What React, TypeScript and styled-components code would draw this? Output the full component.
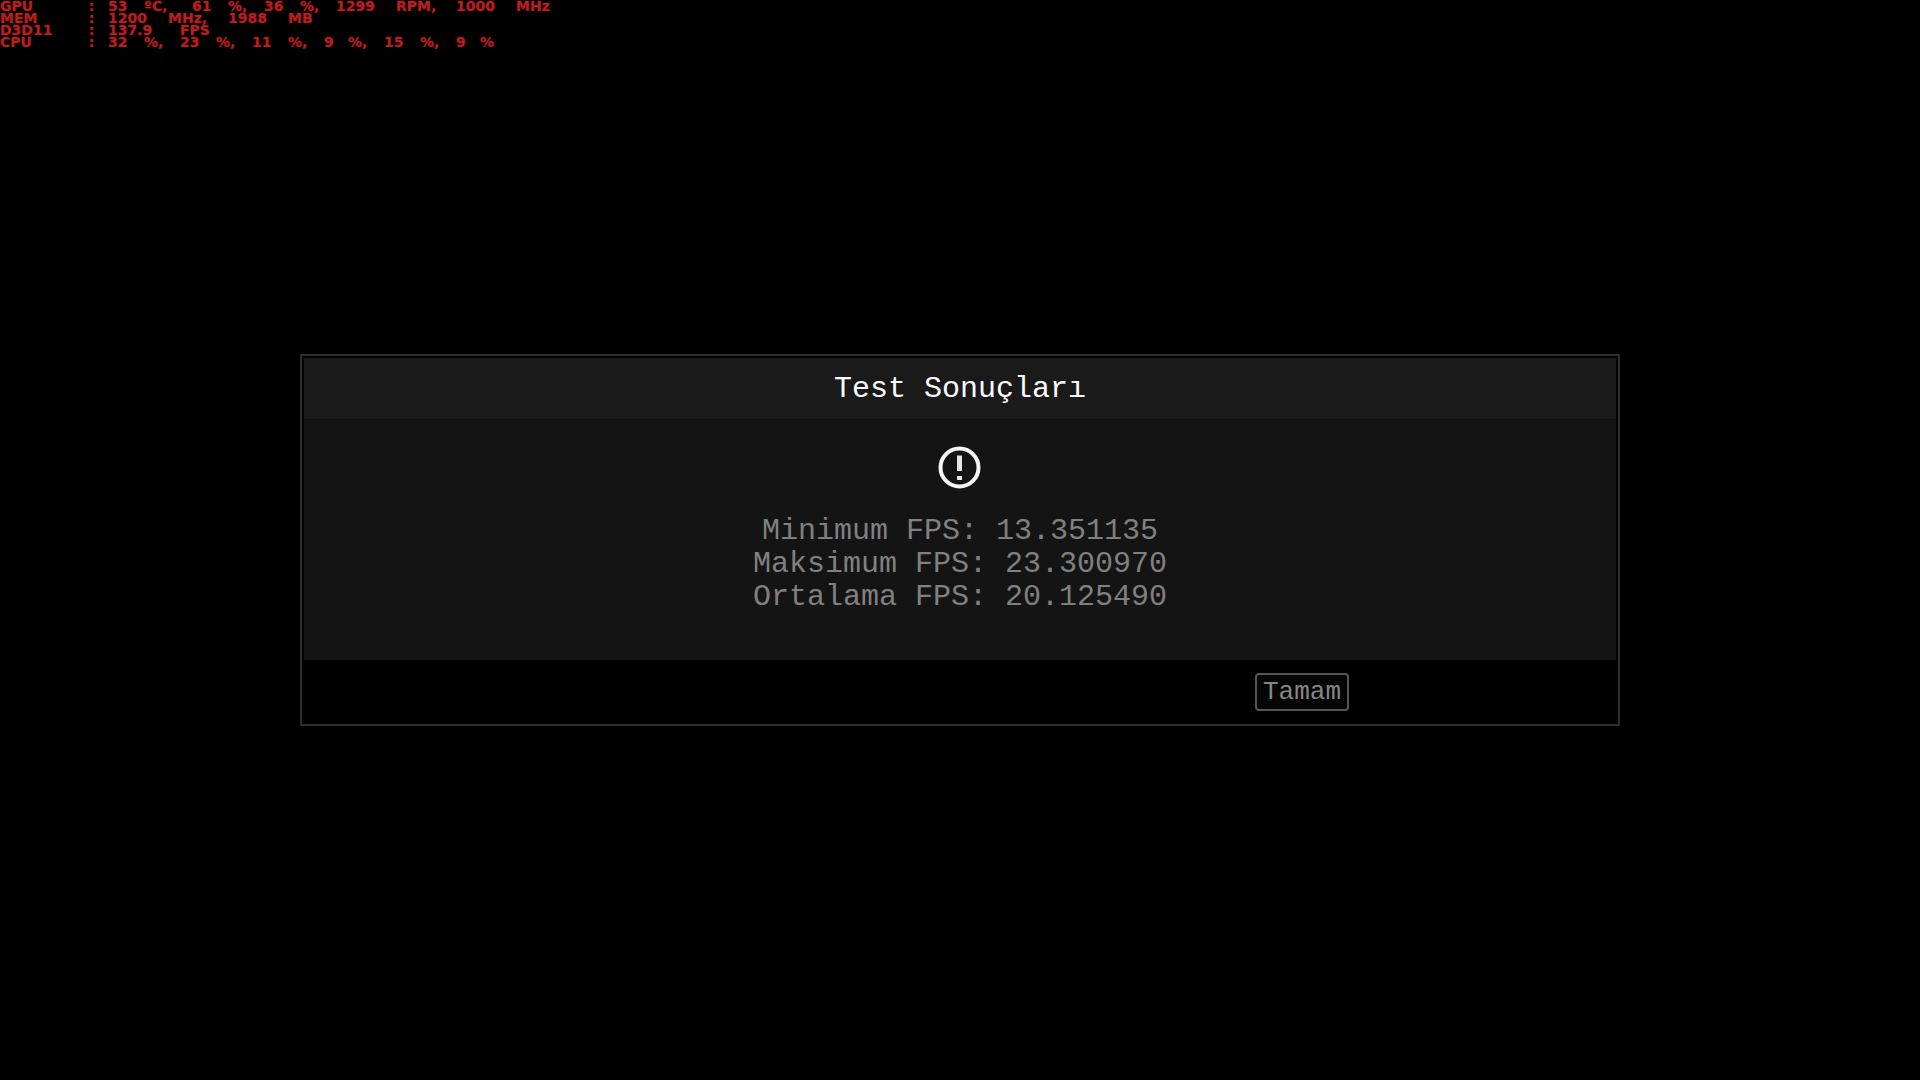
import React from "react";
import styled, { createGlobalStyle } from "styled-components";

const GlobalStyle = createGlobalStyle`
  *, *::before, *::after {
    box-sizing: border-box;
  }
  body {
    margin: 0;
    background: #000;
    font-family: "Liberation Mono", "DejaVu Sans Mono", monospace;
  }
`;

const Screen = styled.main`
  min-height: 100vh;
  display: grid;
  place-items: center;
  background: #000;
`;

/* Hardware monitor, drawn over whatever is on screen */
const Monitor = styled.aside`
  position: absolute;
  top: 0;
  left: 0;
  color: #b82020;
  font: bold 14px/12px "DejaVu Sans", sans-serif;
  text-shadow: 0 0 2px #5c0000;
`;

const MonitorRow = styled.div`
  display: flex;
`;

const Word = styled.span<{ $cells: number }>`
  flex: none;
  width: ${({ $cells }) => $cells * 12}px;
  white-space: pre;
`;

const Dialog = styled.section`
  width: 1320px;
  max-width: 100%;
  padding: 2px;
  border: 2px solid #2d2d2d;
  background: #000;
`;

const Header = styled.header`
  padding: 13px 12px 12px;
  background: #1a1a1a;
  border-bottom: 1px solid #101010;
`;

const Title = styled.h1`
  margin: 0;
  color: #fafafa;
  font-size: 30px;
  font-weight: normal;
  line-height: 36px;
  text-align: center;
`;

const Body = styled.div`
  display: flex;
  flex-direction: column;
  align-items: center;
  gap: 25px;
  padding: 26px 24px 46px;
  background: #141414;
`;

const AlertIcon = styled.svg`
  display: block;
  width: 44px;
  height: 44px;
`;

const Results = styled.div`
  color: #808080;
  font-size: 30px;
  line-height: 33px;
  text-align: center;
`;

const Result = styled.p`
  margin: 0;
`;

const Footer = styled.footer`
  display: flex;
  justify-content: flex-end;
  padding: 13px 267px 11px 12px;
`;

const Button = styled.button`
  padding: 0 6px;
  border: 2px solid #555;
  border-radius: 4px;
  background: #050505;
  color: #858585;
  font-family: inherit;
  font-size: 26px;
  line-height: 34px;
`;

const readings = [
  { name: "GPU", value: "53 ºC, 61 %, 36 %, 1299 RPM, 1000 MHz" },
  { name: "MEM", value: "1200 MHz, 1988 MB" },
  { name: "D3D11", value: "137.9 FPS" },
  { name: "CPU", value: "32 %, 23 %, 11 %, 9 %, 15 %, 9 %" },
];

const results = [
  "Minimum FPS: 13.351135",
  "Maksimum FPS: 23.300970",
  "Ortalama FPS: 20.125490",
];

export default function App() {
  return (
    <Screen>
      <GlobalStyle />
      <Monitor>
        {readings.map(({ name, value }) => (
          <MonitorRow key={name}>
            <Word $cells={7}>{name}</Word>
            <Word $cells={2}> :</Word>
            {value.split(" ").map((word, i) => (
              <Word key={i} $cells={word.length + 1}>
                {word}
              </Word>
            ))}
          </MonitorRow>
        ))}
      </Monitor>
      <Dialog role="alertdialog" aria-labelledby="title" aria-describedby="results">
        <Header>
          <Title id="title">Test Sonuçları</Title>
        </Header>
        <Body>
          <AlertIcon viewBox="0 0 44 44" aria-hidden="true">
            <circle cx="21.5" cy="21.5" r="19" fill="none" stroke="#f4f4f4" strokeWidth="4" />
            <path d="M19 9.5h5v15.5h-5zM19 30h5v4h-5z" fill="#e6e6e6" />
          </AlertIcon>
          <Results id="results">
            {results.map((line) => (
              <Result key={line}>{line}</Result>
            ))}
          </Results>
        </Body>
        <Footer>
          <Button type="button">Tamam</Button>
        </Footer>
      </Dialog>
    </Screen>
  );
}
